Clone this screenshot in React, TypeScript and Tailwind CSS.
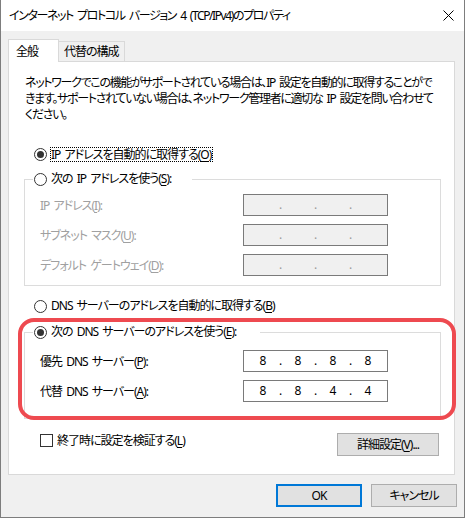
import React from "react";

const U = ({ c }: { c: string }) => (
  <span className="underline underline-offset-[2px] decoration-[1px]">{c}</span>
);

const Sp = () => <span className="tracking-[1px]"> </span>;

function Radio({ checked }: { checked?: boolean }) {
  return (
    <span className="w-[13px] h-[13px] rounded-full border border-[#333333] bg-white flex items-center justify-center shrink-0">
      {checked && <span className="w-[7px] h-[7px] rounded-full bg-[#333333]" />}
    </span>
  );
}

function IPField({ values, disabled }: { values?: string[]; disabled?: boolean }) {
  const v = values ?? ["", "", "", ""];
  return (
    <div
      className={
        disabled
          ? "w-[145px] h-[22px] border border-[#7a7a7a] bg-[#f0f0f0] text-[#9a9a9a] flex items-center pl-[6px] tracking-normal"
          : "w-[145px] h-[22px] border border-[#7a7a7a] bg-white text-black flex items-center pl-[6px] tracking-normal"
      }
    >
      {v.map((x, i) => (
        <React.Fragment key={i}>
          {i > 0 && <span className="w-[9px] text-center">.</span>}
          <span className="w-[26px] text-center">{x}</span>
        </React.Fragment>
      ))}
    </div>
  );
}

function Row({ label, children, disabled }: { label: React.ReactNode; children: React.ReactNode; disabled?: boolean }) {
  return (
    <div className="flex items-center h-[22px]">
      <span className={disabled ? "w-[203px] pt-[2px] text-[#a0a0a0] whitespace-nowrap" : "w-[203px] pt-[2px] whitespace-nowrap"}>{label}</span>
      {children}
    </div>
  );
}

export default function App() {
  return (
    <div className="relative w-[465px] h-[518px] bg-[#f0f0f0] border-l border-r border-b border-[#7d7d7d] flex flex-col text-[12px] tracking-[-1px] text-black font-['Noto_Sans','Noto_Sans_CJK_JP',sans-serif] [font-feature-settings:'palt'] leading-[16px] overflow-hidden">
      {/* Title bar */}
      <div className="h-[31px] bg-white flex items-center justify-between pl-[8px] pr-[10px] shrink-0">
        <span className="whitespace-nowrap tracking-[-1.4px]">
          インターネット<Sp />プロトコル<Sp />バージョン<Sp />4<Sp />(TCP/IPv4)のプロパティ
        </span>
        <svg width="11" height="11" viewBox="0 0 11 11">
          <path d="M0.5 0.5 L10.5 10.5 M10.5 0.5 L0.5 10.5" stroke="#000" strokeWidth="1" fill="none" />
        </svg>
      </div>

      {/* Tabs */}
      <div className="mt-[8px] pl-[7px] flex items-end h-[22px] shrink-0">
        <div className="relative z-10 w-[51px] h-[23px] mb-[-1px] bg-white border-t border-l border-r border-[#d9d9d9] pl-[7px] pt-[4px]">
          全般
        </div>
        <div className="w-[66px] h-[20px] bg-[#f0f0f0] border-t border-r border-[#d9d9d9] pl-[5px] pt-[2px]">
          代替の構成
        </div>
      </div>

      {/* Panel */}
      <div className="ml-[7px] w-[447px] h-[414px] bg-white border border-[#d9d9d9] pl-[15px] pr-[13px] shrink-0 flex flex-col">
        <p className="mt-[13px] pl-[1px] leading-[16px] whitespace-nowrap tracking-[-1.3px]">
          ネットワークでこの機能がサポートされている場合は、IP<Sp />設定を自動的に取得することがで
          <br />
          きます。サポートされていない場合は、ネットワーク管理者に適切な<Sp />IP<Sp />設定を問い合わせて
          <br />
          ください。
        </p>

        <div className="mt-[23px] h-[16px] pl-[10px] flex items-center gap-[3px]">
          <Radio checked />
          <span className="inline-block h-[15px] leading-[13px] border border-dotted border-black pr-[1px] whitespace-nowrap">
            IP<Sp />アドレスを自動的に取得する(<U c="O" />)
          </span>
        </div>

        <fieldset className="mt-[9px] border border-[#dcdcdc] min-w-0">
          <legend className="ml-[8px] w-[159px] h-[16px] pl-[1px]">
            <span className="flex items-center gap-[4px] h-[16px] whitespace-nowrap">
              <Radio />
              <span>次の<Sp />IP<Sp />アドレスを使う(<U c="S" />):</span>
            </span>
          </legend>
          <div className="pt-[7px] pb-[9px] pl-[15px] flex flex-col gap-[8px]">
            <Row disabled label={<>IP<Sp />アドレス(<U c="I" />):</>}>
              <IPField disabled />
            </Row>
            <Row disabled label={<>サブネット<Sp />マスク(<U c="U" />):</>}>
              <IPField disabled />
            </Row>
            <Row disabled label={<>デフォルト<Sp />ゲートウェイ(<U c="D" />):</>}>
              <IPField disabled />
            </Row>
          </div>
        </fieldset>

        <div className="mt-[12px] h-[16px] pl-[10px] flex items-center gap-[4px] whitespace-nowrap">
          <Radio />
          <span>DNS<Sp />サーバーのアドレスを自動的に取得する(<U c="B" />)</span>
        </div>

        <fieldset className="mt-[10px] border border-[#dcdcdc] min-w-0">
          <legend className="ml-[8px] w-[227px] h-[16px] pl-[1px]">
            <span className="flex items-center gap-[4px] h-[16px] whitespace-nowrap">
              <Radio checked />
              <span>次の<Sp />DNS<Sp />サーバーのアドレスを使う(<U c="E" />):</span>
            </span>
          </legend>
          <div className="pt-[10px] pb-[16px] pl-[15px] flex flex-col gap-[8px]">
            <Row label={<>優先<Sp />DNS<Sp />サーバー(<U c="P" />):</>}>
              <IPField values={["8", "8", "8", "8"]} />
            </Row>
            <Row label={<>代替<Sp />DNS<Sp />サーバー(<U c="A" />):</>}>
              <IPField values={["8", "8", "4", "4"]} />
            </Row>
          </div>
        </fieldset>

        <div className="mt-[14px] flex items-start justify-between">
          <div className="ml-[16px] mt-[1px] flex items-center gap-[4px] h-[13px] whitespace-nowrap">
            <span className="w-[13px] h-[13px] border border-[#333333] bg-white shrink-0" />
            <span>終了時に設定を検証する(<U c="L" />)</span>
          </div>
          <button className="mr-[2px] w-[102px] h-[23px] bg-[#e1e1e1] border border-[#adadad] flex items-center justify-center whitespace-nowrap">
            <span>詳細設定(<U c="V" />)...</span>
          </button>
        </div>
      </div>

      {/* Bottom buttons */}
      <div className="mt-[9px] pr-[7px] flex justify-end gap-[9px] shrink-0">
        <button className="w-[86px] h-[23px] bg-[#e1e1e1] border-2 border-[#0078d7] flex items-center justify-center">
          OK
        </button>
        <button className="w-[86px] h-[23px] bg-[#e1e1e1] border border-[#adadad] flex items-center justify-center">
          キャンセル
        </button>
      </div>

      {/* Red annotation outline */}
      <div className="absolute left-[17px] top-[318px] w-[438px] h-[102px] border-[4px] border-[#ee4a50] rounded-[16px] pointer-events-none" />
    </div>
  );
}
